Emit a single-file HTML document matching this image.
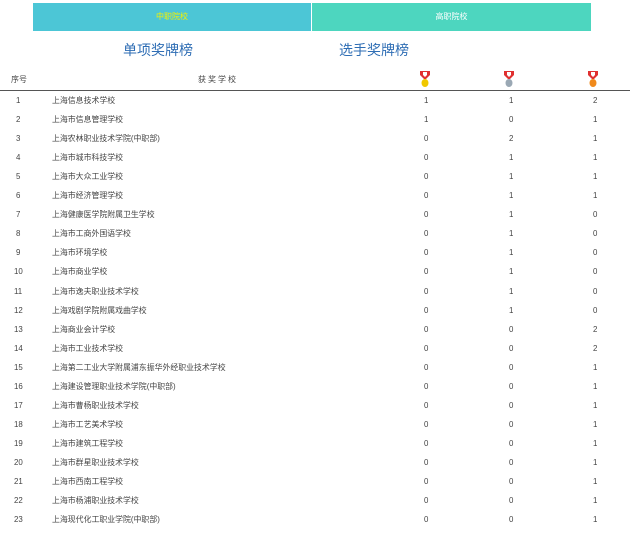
<!DOCTYPE html>
<html><head><meta charset="utf-8"><style>
*{margin:0;padding:0;box-sizing:border-box}
body{width:630px;height:534px;background:#fff;font-family:"Liberation Sans","Noto Sans CJK SC",sans-serif;position:relative;overflow:hidden;color:#555}
.tab{position:absolute;top:3px;height:28px;font-size:8px;line-height:28px;text-align:center}
.t{position:absolute;top:40px;font-size:14px;color:#2e6db4}
.hd{position:absolute;top:74px;font-size:8px;color:#444}
.line{position:absolute;left:0;top:90px;width:630px;height:1px;background:#555}
.r{position:absolute;left:0;width:630px;height:19px;font-size:7.9px;line-height:19px;color:#444}
.r span{position:absolute}
.m{position:absolute;top:70px}
</style></head><body>
<div class="tab" style="left:33px;width:278px;background:#4cc6d6;color:#f5f200">中职院校</div>
<div class="tab" style="left:312px;width:279px;background:#4dd6bf;color:#fff">高职院校</div>
<div class="t" style="left:123px">单项奖牌榜</div>
<div class="t" style="left:339px">选手奖牌榜</div>
<div class="hd" style="left:11px">序号</div>
<div class="hd" style="left:198px;letter-spacing:2px">获奖学校</div>
<svg class="m" style="left:419px" width="12" height="18"><path d="M1 1h10v4l-4 4h-2l-4-4z" fill="#e03030"/><path d="M4 2h4v3l-2 2-2-2z" fill="#fff"/><ellipse cx="6" cy="13" rx="3.5" ry="4" fill="#f0c800"/></svg>
<svg class="m" style="left:503px" width="12" height="18"><path d="M1 1h10v4l-4 4h-2l-4-4z" fill="#e03030"/><path d="M4 2h4v3l-2 2-2-2z" fill="#fff"/><ellipse cx="6" cy="13" rx="3.5" ry="4" fill="#9aa8b4"/></svg>
<svg class="m" style="left:587px" width="12" height="18"><path d="M1 1h10v4l-4 4h-2l-4-4z" fill="#e03030"/><path d="M4 2h4v3l-2 2-2-2z" fill="#fff"/><ellipse cx="6" cy="13" rx="3.5" ry="4" fill="#f08a1c"/></svg>
<div class="line"></div>
<div id="rows"></div>
<script>
var d=[["上海信息技术学校",1,1,2],["上海市信息管理学校",1,0,1],["上海农林职业技术学院(中职部)",0,2,1],["上海市城市科技学校",0,1,1],["上海市大众工业学校",0,1,1],["上海市经济管理学校",0,1,1],["上海健康医学院附属卫生学校",0,1,0],["上海市工商外国语学校",0,1,0],["上海市环境学校",0,1,0],["上海市商业学校",0,1,0],["上海市逸夫职业技术学校",0,1,0],["上海戏剧学院附属戏曲学校",0,1,0],["上海商业会计学校",0,0,2],["上海市工业技术学校",0,0,2],["上海第二工业大学附属浦东振华外经职业技术学校",0,0,1],["上海建设管理职业技术学院(中职部)",0,0,1],["上海市曹杨职业技术学校",0,0,1],["上海市工艺美术学校",0,0,1],["上海市建筑工程学校",0,0,1],["上海市群星职业技术学校",0,0,1],["上海市西南工程学校",0,0,1],["上海市杨浦职业技术学校",0,0,1],["上海现代化工职业学院(中职部)",0,0,1]];
var h="";d.forEach(function(r,i){var y=91+i*19.05;h+='<div class="r" style="top:'+y+'px"><span style="left:'+(i<9?16:14)+'px">'+(i+1)+'</span><span style="left:52px">'+r[0]+'</span><span style="left:424px">'+r[1]+'</span><span style="left:509px">'+r[2]+'</span><span style="left:593px">'+r[3]+'</span></div>'});
document.getElementById("rows").innerHTML=h;
</script>
</body></html>
